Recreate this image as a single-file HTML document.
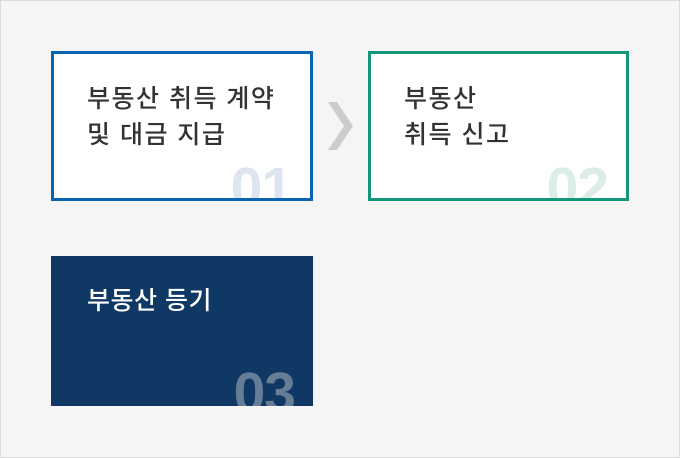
<!DOCTYPE html>
<html><head><meta charset="utf-8"><style>
*{margin:0;padding:0;box-sizing:border-box}
html,body{width:680px;height:458px}
body{background:#f5f5f5;position:relative;overflow:hidden;font-family:"Liberation Sans","Noto Sans CJK KR",sans-serif}
.frame{position:absolute;left:0;top:0;width:680px;height:458px;border:1px solid #dcdcdc}
.b{position:absolute;width:262px;height:150px;overflow:hidden}
.t{position:absolute;left:33px;top:27px;font-size:25px;letter-spacing:1.5px;line-height:36px;color:#333;font-weight:500;white-space:nowrap}
.t span{letter-spacing:0}
.n{position:absolute;right:18px;top:106px;font-size:57px;font-weight:bold;line-height:1;letter-spacing:-1px}
</style></head><body>
<div class="frame"></div>
<div class="b" style="left:51px;top:51px;background:#fff;border:3px solid #0b64b2">
<div class="t">부동산 취득 계약<br>및 대금 지급</div><div class="n" style="color:#dde5f0">01</div></div>
<svg style="position:absolute;left:326px;top:100px" width="30" height="54"><polygon points="2,2 11,2 27,26 11,50 2,50 18,26" fill="#cccccc"/></svg>
<div class="b" style="left:368px;top:51px;width:261px;background:#fff;border:3px solid #14967a">
<div class="t">부동산<br>취득 신고</div><div class="n" style="color:#dcece8">02</div></div>
<div class="b" style="left:51px;top:256px;background:#0f3864">
<div class="t" style="left:36px;top:27px;color:#fff;letter-spacing:0.5px">부동산 등기</div><div class="n" style="color:#667d98;right:18px;top:109px">03</div></div>
</body></html>
